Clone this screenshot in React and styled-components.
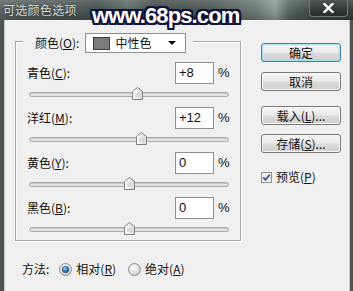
import React from "react";
import styled, { createGlobalStyle } from "styled-components";

const GlobalStyle = createGlobalStyle`
  html, body {
    margin: 0;
    padding: 0;
    background: #f0f0f0;
  }
  body {
    font-family: "Noto Sans CJK SC", "Liberation Sans", sans-serif;
    font-size: 12px;
    color: #111;
  }
`;

const Window = styled.div`
  position: relative;
  width: 353px;
  height: 291px;
  display: flex;
  flex-direction: column;
  overflow: hidden;
  background: #f0f0f0;
`;

const TitleBar = styled.div`
  flex: none;
  height: 20px;
  display: flex;
  justify-content: space-between;
  align-items: flex-start;
  background:
    linear-gradient(180deg, rgba(255,255,255,0.18) 0%, rgba(255,255,255,0.05) 45%, rgba(0,0,0,0.15) 100%),
    linear-gradient(90deg, #56605e 0%, #4a5453 18%, #3e4948 28%, #5b6764 36%, #3d4746 44%, #47524f 60%, #66736f 72%, #8a9693 78%, #51605c 82%, #3b4645 88%, #2f3938 100%);
`;

const Title = styled.div`
  margin: 2px 0 0 3px;
  font-size: 12px;
  line-height: 15px;
  color: #cfd4d3;
  letter-spacing: 0.3px;
  text-shadow: 0 0 3px rgba(0, 0, 0, 0.5);
`;

const CloseButton = styled.div`
  width: 39px;
  height: 17px;
  margin-right: 5px;
  display: flex;
  align-items: center;
  justify-content: center;
  border: 1px solid #6f7a78;
  border-top: none;
  border-radius: 0 0 4px 4px;
  box-sizing: border-box;
  background: linear-gradient(180deg, #4d5756 0%, #333c3b 55%, #262e2d 100%);
`;

const Watermark = styled.div`
  position: absolute;
  left: 92px;
  top: 4px;
  font-family: "Liberation Sans", Arial, sans-serif;
  font-weight: bold;
  font-size: 22px;
  line-height: 24px;
  letter-spacing: -0.9px;
  color: #ffffff;
  text-shadow:
    2px 0 0 #10143a, -2px 0 0 #10143a, 0 2px 0 #10143a, 0 -2px 0 #10143a,
    2px 2px 0 #10143a, -2px -2px 0 #10143a, 2px -2px 0 #10143a, -2px 2px 0 #10143a,
    0 0 3px #10143a;
`;

const Body = styled.div`
  flex: 1;
  display: flex;
  border-left: 4px solid #4b5453;
  border-right: 3px solid #4b5453;
  box-shadow: inset 1px 0 0 #c4c8c8, inset -1px 0 0 #c4c8c8;
  padding-left: 11px;
`;

const LeftColumn = styled.div`
  width: 226px;
  display: flex;
  flex-direction: column;
`;

const GroupBox = styled.div`
  margin-top: 21px;
  border: 1px solid #a7a9a9;
  box-shadow: inset 1px 1px 0 #ffffff, 1px 1px 0 #ffffff;
  padding: 0 10px 4px 11px;
  display: flex;
  flex-direction: column;
  gap: 6px;
`;

const Legend = styled.div`
  align-self: flex-start;
  margin: -9px 0 3px -4px;
  padding: 0 7px 0 12px;
  display: flex;
  align-items: center;
  gap: 6px;
  background: #f0f0f0;
`;

const Label = styled.span`
  font-size: 12px;
  line-height: 16px;
  white-space: nowrap;
  flex: 1;
`;

const Select = styled.div`
  width: 101px;
  height: 20px;
  box-sizing: border-box;
  border: 1px solid #8e8f8f;
  background: #ffffff;
  display: flex;
  align-items: center;
  padding: 0 5px 0 7px;
`;

const Swatch = styled.span`
  width: 15px;
  height: 11px;
  background: ${(p) => p.color};
  border: 1px solid #3a3a3a;
  margin-right: 5px;
`;

const SelectText = styled.span`
  flex: 1;
  font-size: 12px;
  line-height: 16px;
`;

const Arrow = styled.span`
  width: 0;
  height: 0;
  border-left: 4px solid transparent;
  border-right: 4px solid transparent;
  border-top: 4px solid #111;
  margin-right: 4px;
`;

const SliderRow = styled.div`
  display: flex;
  flex-direction: column;
`;

const FieldLine = styled.div`
  display: flex;
  align-items: center;
`;

const NumberBox = styled.div`
  width: 39px;
  height: 22px;
  box-sizing: border-box;
  border: 1px solid #8e8f8f;
  background: #ffffff;
  padding-left: 3px;
  font-family: "Liberation Sans", Arial, sans-serif;
  font-size: 13px;
  line-height: 20px;
`;

const Percent = styled.span`
  width: 12px;
  margin-left: 4px;
  font-family: "Liberation Sans", Arial, sans-serif;
  font-size: 13px;
  line-height: 16px;
`;

const SliderWrap = styled.div`
  position: relative;
  width: 200px;
  height: 14px;
  margin: 3px 0 0 2px;
  display: flex;
  align-items: center;
`;

const Track = styled.div`
  width: 100%;
  height: 3px;
  border: 1px solid #a9abab;
  border-radius: 3px;
  background: #e2e3e3;
  box-shadow: inset 0 1px 0 #c8c9c9;
`;

const Thumb = styled.svg`
  position: absolute;
  top: 0;
`;

const MethodRow = styled.div`
  margin: 20px 0 0 7px;
  display: flex;
  align-items: center;
  height: 16px;
`;

const MethodLabel = styled.span`
  font-size: 12px;
  line-height: 16px;
  margin-right: 10px;
`;

const RadioOption = styled.label`
  display: flex;
  align-items: center;
  gap: 4px;
  margin-right: 12px;
  font-size: 12px;
  line-height: 16px;
`;

const RightColumn = styled.div`
  margin-left: 20px;
  width: 80px;
  padding-top: 23px;
  display: flex;
  flex-direction: column;
`;

const Button = styled.div`
  height: 19px;
  box-sizing: border-box;
  margin-top: ${(p) => p.gap || 0}px;
  display: flex;
  align-items: center;
  justify-content: center;
  font-size: 12px;
  line-height: 16px;
  border: 1px solid ${(p) => (p.primary ? "#3d83b5" : "#7a7a7a")};
  border-radius: 3px;
  background: linear-gradient(180deg, #f4f4f4 0%, #ebebeb 48%, #dcdcdc 52%, #cfcfcf 100%);
  box-shadow: inset 0 0 0 1px ${(p) => (p.primary ? "#a8dcef" : "#f8f8f8")};
`;

const CheckRow = styled.label`
  margin-top: 16px;
  display: flex;
  align-items: center;
  gap: 4px;
  font-size: 12px;
  line-height: 16px;
`;

function SliderThumb({ value }) {
  const pct = (value + 100) / 2;
  return (
    <Thumb width="11" height="13" viewBox="0 0 11 13" style={{ left: `calc(${pct}% - 5.5px)` }}>
      <defs>
        <linearGradient id="tg" x1="0" y1="0" x2="1" y2="0">
          <stop offset="0" stopColor="#ffffff" />
          <stop offset="1" stopColor="#d6d8d8" />
        </linearGradient>
      </defs>
      <path d="M0.5 4.5 L5.5 0.5 L10.5 4.5 V12.5 H0.5 Z" fill="url(#tg)" stroke="#808282" />
      <path d="M3 7 H8 M3 9 H8" stroke="#c4c6c6" />
    </Thumb>
  );
}

function ColorSlider({ name, hotkey, value, shown }) {
  return (
    <SliderRow>
      <FieldLine>
        <Label>
          {name}(<u>{hotkey}</u>):
        </Label>
        <NumberBox>{shown}</NumberBox>
        <Percent>%</Percent>
      </FieldLine>
      <SliderWrap>
        <Track />
        <SliderThumb value={value} />
      </SliderWrap>
    </SliderRow>
  );
}

function Radio({ checked }) {
  return (
    <svg width="13" height="13" viewBox="0 0 13 13">
      <defs>
        <radialGradient id={checked ? "rOn" : "rOff"} cx="0.4" cy="0.35" r="0.7">
          <stop offset="0" stopColor="#ffffff" />
          <stop offset="1" stopColor="#c9cbcb" />
        </radialGradient>
        <radialGradient id="dot" cx="0.4" cy="0.35" r="0.7">
          <stop offset="0" stopColor="#8fd0f7" />
          <stop offset="0.6" stopColor="#2c78b5" />
          <stop offset="1" stopColor="#1c4f80" />
        </radialGradient>
      </defs>
      <circle cx="6.5" cy="6.5" r="6" fill={checked ? "url(#rOn)" : "url(#rOff)"} stroke="#8a8c8c" />
      {checked && <circle cx="6.5" cy="6.5" r="3.3" fill="url(#dot)" stroke="#1e4a73" strokeWidth="0.6" />}
    </svg>
  );
}

const sliders = [
  { name: "青色", hotkey: "C", value: 8, shown: "+8" },
  { name: "洋红", hotkey: "M", value: 12, shown: "+12" },
  { name: "黄色", hotkey: "Y", value: 0, shown: "0" },
  { name: "黑色", hotkey: "B", value: 0, shown: "0" },
];

export default function App() {
  return (
    <>
      <GlobalStyle />
      <Window>
        <TitleBar>
          <Title>可选颜色选项</Title>
          <CloseButton>
            <svg width="11" height="10" viewBox="0 0 11 10">
              <path d="M1.5 1 L9.5 9 M9.5 1 L1.5 9" stroke="#ffffff" strokeWidth="2.4" strokeLinecap="square" />
            </svg>
          </CloseButton>
        </TitleBar>
        <Body>
          <LeftColumn>
            <GroupBox>
              <Legend>
                <Label>
                  颜色(<u>O</u>):
                </Label>
                <Select>
                  <Swatch color="#7b7b7b" />
                  <SelectText>中性色</SelectText>
                  <Arrow />
                </Select>
              </Legend>
              {sliders.map((s) => (
                <ColorSlider key={s.hotkey} {...s} />
              ))}
            </GroupBox>
            <MethodRow>
              <MethodLabel>方法:</MethodLabel>
              <RadioOption>
                <Radio checked />
                <span>
                  相对(<u>R</u>)
                </span>
              </RadioOption>
              <RadioOption>
                <Radio />
                <span>
                  绝对(<u>A</u>)
                </span>
              </RadioOption>
            </MethodRow>
          </LeftColumn>
          <RightColumn>
            <Button primary>确定</Button>
            <Button gap={10}>取消</Button>
            <Button gap={15}>
              载入(<u>L</u>)...
            </Button>
            <Button gap={9}>
              存储(<u>S</u>)...
            </Button>
            <CheckRow>
              <svg width="11" height="11" viewBox="0 0 11 11">
                <rect x="0.5" y="0.5" width="10" height="10" fill="#eef1f6" stroke="#8e8f8f" />
                <path d="M2.3 5.4 L4.4 7.8 L8.8 2.6" fill="none" stroke="#3f5a9a" strokeWidth="1.8" />
              </svg>
              <span>
                预览(<u>P</u>)
              </span>
            </CheckRow>
          </RightColumn>
        </Body>
        <Watermark>www.68ps.com</Watermark>
      </Window>
    </>
  );
}
